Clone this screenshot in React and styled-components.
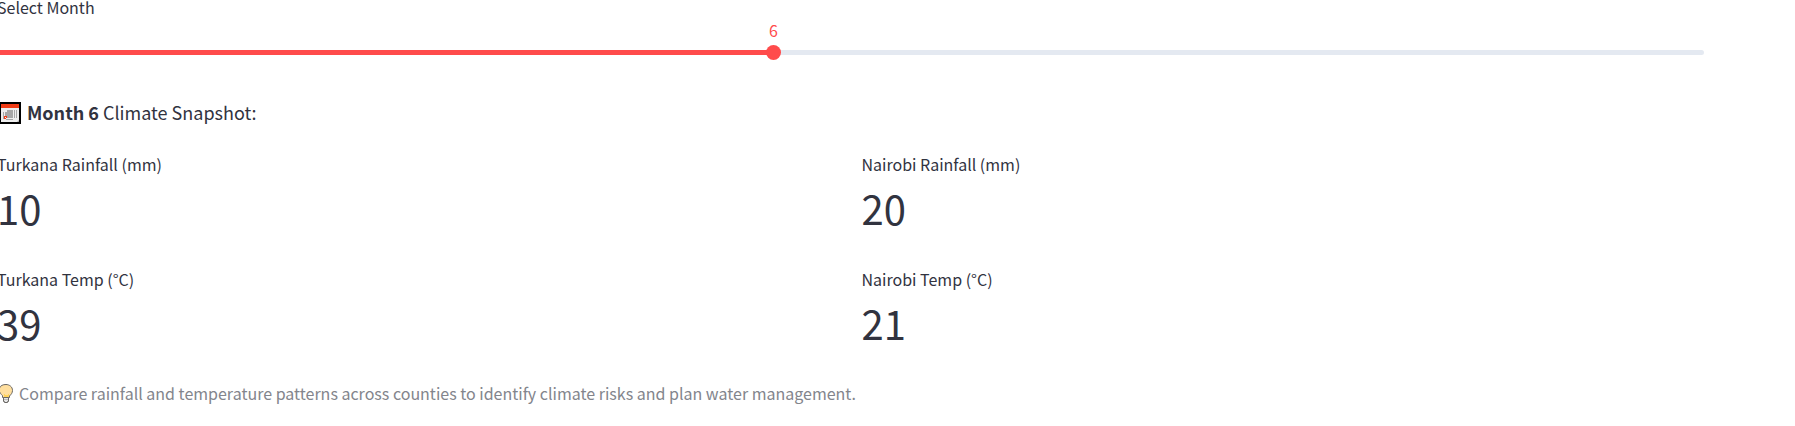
import React, { useState } from "react";
import styled, { createGlobalStyle } from "styled-components";

const GlobalStyle = createGlobalStyle`
  *, *::before, *::after { box-sizing: border-box; }
  html, body { margin: 0; background: #ffffff; }
  body { overflow-x: hidden; }
  #root { display: flow-root; }
`;

const Page = styled.main`
  margin: -5px 91px 0 -3px;
  font-family: "Noto Sans CJK SC", "Noto Sans", sans-serif;
  font-size: 16px;
  line-height: 24px;
  color: #31333f;
`;

const SliderField = styled.div`
  margin-bottom: 37px;
`;

const FieldLabel = styled.label`
  display: block;
`;

const ValueRail = styled.div`
  padding: 0 7px;
`;

const ValueTrack = styled.div`
  position: relative;
  height: 22px;
  margin-bottom: 4px;
`;

const ValueLabel = styled.output`
  position: absolute;
  top: 0;
  transform: translateX(-50%);
  line-height: 22px;
  color: #ff4b4b;
`;

const Range = styled.input`
  appearance: none;
  display: block;
  width: 100%;
  height: 15px;
  margin: 0;
  background: transparent;
  cursor: pointer;

  &::-webkit-slider-runnable-track {
    height: 5px;
    border-radius: 5px;
    background: linear-gradient(
      to right,
      #ff4b4b var(--filled),
      #e4e9f1 var(--filled)
    );
  }
  &::-webkit-slider-thumb {
    appearance: none;
    width: 15px;
    height: 15px;
    margin-top: -5px;
    border-radius: 50%;
    background: #ff4b4b;
  }
`;

const Heading = styled.p`
  display: flex;
  align-items: center;
  gap: 6px;
  margin: 0 0 25px;
  font-size: 18px;
  line-height: 30px;
`;

const Metrics = styled.dl`
  display: grid;
  grid-template-columns: 1fr 1fr;
  gap: 31px 22px;
  margin: 0 0 30px;
`;

const MetricLabel = styled.dt`
  margin-bottom: 4px;
`;

const MetricValue = styled.dd`
  margin: 0;
  font-size: 40px;
  line-height: 56px;
`;

const Caption = styled.p`
  display: flex;
  align-items: center;
  gap: 5px;
  margin: 0;
  color: #83858c;
`;

const Icon = styled.svg`
  flex: none;
  display: block;
`;

function CalendarIcon() {
  return (
    <Icon width="24" height="24" viewBox="-3 -2 24 24" aria-hidden="true">
      <rect x="0" y="0" width="21" height="22" fill="#000" />
      <rect x="1" y="2" width="18" height="4" fill="#f23c16" />
      <rect x="1" y="6" width="18" height="14" fill="#eeeeee" />
      <path d="M7 8h6v8H5v-6h2z" fill="#a7a7a7" />
      <path d="M3 10h1v7H3zM14 8h1v8h-1zM16 8h1v8h-1zM6 17h7v1H6z" fill="#a7a7a7" />
      <path d="M4 14h3v2H6v1H4z" fill="#f23c16" />
      <path d="M5 15h1v1H5z" fill="#eee" />
      <path d="M19 18v2h-2z" fill="#a7a7a7" />
    </Icon>
  );
}

function BulbIcon() {
  return (
    <Icon width="17" height="22" viewBox="-3 -2 17 22" aria-hidden="true">
      <path
        d="M2.5 13.5v-1.8C.8 10 .2 9-.5 7.5V4C.5 1.500 3 .5 6 .5s6.500 2 6.500 6c0 2.500-1.500 4-3 5.500v1.500z"
        fill="#ffdf9f"
        stroke="#6b6865"
      />
      <path d="M4 10h1v1h3v-1h1v3H4z" fill="#ffd35c" />
      <path d="M3.500 13.500h5v4H7.500v1h-3v-1h-1z" fill="#e6e6e6" stroke="#6b6865" />
      <path d="M4 15h4v1H4z" fill="#bdbdbd" />
    </Icon>
  );
}

const MIN = 1;
const MAX = 12;

const metrics = [
  { label: "Turkana Rainfall (mm)", value: 10 },
  { label: "Nairobi Rainfall (mm)", value: 20 },
  { label: "Turkana Temp (°C)", value: 39 },
  { label: "Nairobi Temp (°C)", value: 21 },
];

export default function App() {
  const [month, setMonth] = useState(6);
  const filled = `${((month - MIN) / (MAX - MIN)) * 100}%`;

  return (
    <>
      <GlobalStyle />
      <Page>
        <SliderField>
          <FieldLabel htmlFor="month">Select Month</FieldLabel>
          <ValueRail>
            <ValueTrack>
              <ValueLabel htmlFor="month" style={{ left: filled }}>
                {month}
              </ValueLabel>
            </ValueTrack>
          </ValueRail>
          <Range
            id="month"
            type="range"
            min={MIN}
            max={MAX}
            value={month}
            onChange={(e) => setMonth(Number(e.target.value))}
            style={{ "--filled": filled }}
          />
        </SliderField>
        <Heading>
          <CalendarIcon />
          <span>
            <strong>Month {month}</strong> Climate Snapshot:
          </span>
        </Heading>
        <Metrics>
          {metrics.map(({ label, value }) => (
            <div key={label}>
              <MetricLabel>{label}</MetricLabel>
              <MetricValue>{value}</MetricValue>
            </div>
          ))}
        </Metrics>
        <Caption>
          <BulbIcon />
          <span>
            Compare rainfall and temperature patterns across counties to
            identify climate risks and plan water management.
          </span>
        </Caption>
      </Page>
    </>
  );
}
